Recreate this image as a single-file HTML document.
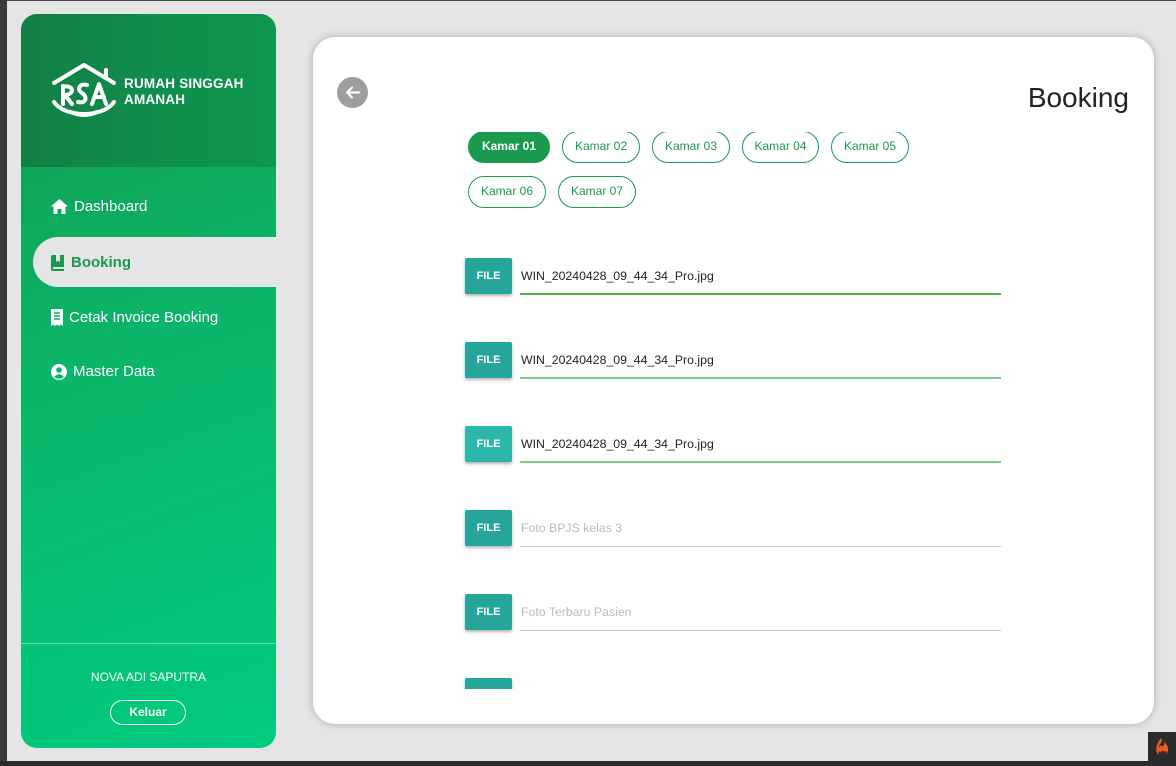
<!DOCTYPE html>
<html><head><meta charset="utf-8"><style>
*{box-sizing:border-box;margin:0;padding:0}
body{width:1176px;height:766px;background:#e5e5e5;position:relative;overflow:hidden;font-family:"Liberation Sans",sans-serif}
.lstrip{position:absolute;left:0;top:0;width:7px;height:766px;background:#3a3a3a}
.bbar{position:absolute;left:0;top:761px;width:1176px;height:5px;background:#2a2a2a}
.tline{position:absolute;left:0;top:0;width:1176px;height:1px;background:#444}
.side{position:absolute;left:21px;top:14px;width:255px;height:734px;border-radius:16px;overflow:hidden;background:linear-gradient(160deg,#129a4f 0%,#0bb569 45%,#00cc80 100%)}
.head{position:absolute;left:0;top:0;width:255px;height:153px;background:linear-gradient(90deg,#127f46,#0f8f4d 60%,#0f9650);}
.brand{position:absolute;left:103px;top:62px;color:#fff;font-weight:bold;font-size:13.5px;line-height:16px;letter-spacing:.2px}
.item{position:absolute;left:30px;color:#fff;font-size:15px;display:flex;align-items:center;gap:6px}
.active{position:absolute;left:12px;top:223px;width:244px;height:50px;background:#e5e5e5;border-radius:25px 0 0 25px}
.sep{position:absolute;left:0;top:629px;width:255px;height:1px;background:rgba(255,255,255,.4)}
.name{position:absolute;left:0;top:656px;width:255px;text-align:center;color:#fff;font-size:12px}
.kel{position:absolute;left:89px;top:686px;width:76px;height:25px;border:1.5px solid #fff;border-radius:13px;color:#fff;font-weight:bold;font-size:12px;text-align:center;line-height:22px}
.card{position:absolute;left:313px;top:37px;width:841px;height:687px;background:#fff;border-radius:22px;box-shadow:0 0 8px rgba(0,0,0,.25)}
.back{position:absolute;left:337px;top:77px;width:31px;height:31px;border-radius:50%;background:#9e9e9e}
.title{position:absolute;right:47px;top:82px;font-size:28px;color:#222}
.clip{position:absolute;left:313px;top:132px;width:841px;height:557px;overflow:hidden}
.chip{position:absolute;height:32px;border:1.5px solid #1a9a4e;border-radius:16px;color:#1a9a4e;font-size:12px;text-align:center;line-height:29px}
.chip.on{background:#1a9a4e;color:#fff;font-weight:bold}
.fb{position:absolute;left:152px;width:47px;height:36px;background:#26a69a;color:#fff;font-size:11px;font-weight:bold;text-align:center;line-height:36px;border-radius:2px;box-shadow:0 2px 3px rgba(0,0,0,.3)}
.fi{position:absolute;left:207px;width:481px;height:37px;font-size:12.3px;color:#222;line-height:36px;padding-left:1px}
.fi.ok{border-bottom:2px solid #4caf50}
.fi.ph{border-bottom:1.5px solid #c8c8c8;color:#bbb}
</style></head><body>
<div class="tline"></div><div class="lstrip"></div>
<div class="side">
 <div class="head"></div>
 <svg style="position:absolute;left:30px;top:48px" width="66" height="58" viewBox="0 0 66 58" fill="none" stroke="#fff" stroke-width="4" stroke-linecap="round" stroke-linejoin="round">
  <path d="M3 21 L33 3 L63 21"/><path d="M55 15 V8"/>
  <path d="M12 24 V42"/><path d="M12 25 C22 22 25 32 14 33 L21 42"/>
  <path d="M36 23 C29 21 25 27 31 31 C37 35 35 42 27 40"/>
  <path d="M41 42 L48 22 L55 42 M44 35 H53"/>
  <path d="M3 40 C14 56 52 56 63 40"/><path d="M20 50 C28 54 38 54 46 50"/>
 </svg>
 <div class="brand">RUMAH SINGGAH<br>AMANAH</div>
 <div class="item" style="top:184px"><svg width="17" height="15" viewBox="0 0 17 15"><path d="M8.5 0 L17 7.5 H14.5 V15 H10.5 V10 H6.5 V15 H2.5 V7.5 H0 Z" fill="#fff"/></svg>Dashboard</div>
 <div class="active"></div>
 <div class="item" style="top:240px;color:#179a4f;font-weight:bold"><svg width="14" height="16" viewBox="0 0 14 16"><path d="M0 2 Q0 0 2 0 H13 V12 H2 V14 H13 V16 H2 Q0 16 0 14 Z" fill="#179a4f"/><path d="M5 0 V7 L7 5.5 L9 7 V0" fill="#e5e5e5"/></svg>Booking</div>
 <div class="item" style="top:295px"><svg width="12" height="17" viewBox="0 0 12 17"><path d="M0 0 H12 V17 L10 15.5 L8 17 L6 15.5 L4 17 L2 15.5 L0 17 Z" fill="#fff"/><path d="M3 4H9M3 7H9M3 10H9" stroke="#10a85c" stroke-width="1.5"/></svg>Cetak Invoice Booking</div>
 <div class="item" style="top:349px"><svg width="16" height="16" viewBox="0 0 16 16"><circle cx="8" cy="8" r="8" fill="#fff"/><circle cx="8" cy="6" r="2.8" fill="#0db468"/><path d="M3 13 Q8 7.5 13 13 Q8 16.5 3 13Z" fill="#0db468"/></svg>Master Data</div>
 <div class="sep"></div>
 <div class="name">NOVA ADI SAPUTRA</div>
 <div class="kel">Keluar</div>
</div>
<div class="card"></div>
<div class="back"><svg width="31" height="31" viewBox="0 0 31 31" fill="none" stroke="#fff" stroke-width="2.2" stroke-linecap="round" stroke-linejoin="round"><path d="M22 15.5 H10 M15 10.5 L10 15.5 L15 20.5"/></svg></div>
<div class="title">Booking</div>
<div class="clip">
 <div class="chip on" style="left:155px;top:-1px;width:82px">Kamar 01</div>
 <div class="chip" style="left:249px;top:-1px;width:78px">Kamar 02</div>
 <div class="chip" style="left:339px;top:-1px;width:78px">Kamar 03</div>
 <div class="chip" style="left:429px;top:-1px;width:77px">Kamar 04</div>
 <div class="chip" style="left:518px;top:-1px;width:78px">Kamar 05</div>
 <div class="chip" style="left:155px;top:44px;width:78px">Kamar 06</div>
 <div class="chip" style="left:245px;top:44px;width:78px">Kamar 07</div>
 <div class="fb" style="top:126px">FILE</div><div class="fi ok" style="top:126px">WIN_20240428_09_44_34_Pro.jpg</div>
 <div class="fb" style="top:210px">FILE</div><div class="fi ok" style="top:210px;border-bottom-color:#7cc97f">WIN_20240428_09_44_34_Pro.jpg</div>
 <div class="fb" style="top:294px;background:#2bb8ab">FILE</div><div class="fi ok" style="top:294px;border-bottom-color:#7cc97f">WIN_20240428_09_44_34_Pro.jpg</div>
 <div class="fb" style="top:378px">FILE</div><div class="fi ph" style="top:378px">Foto BPJS kelas 3</div>
 <div class="fb" style="top:462px">FILE</div><div class="fi ph" style="top:462px">Foto Terbaru Pasien</div>
 <div class="fb" style="top:546px">FILE</div>
</div>
<div class="bbar"></div>
<div style="position:absolute;left:1148px;top:732px;width:28px;height:29px;background:#2b2b2b"></div>
<svg style="position:absolute;left:1155px;top:738px" width="15" height="18" viewBox="0 0 15 18"><path d="M6 0 C9 4 3 6 4 10 C4.5 7 7 7 7 9 C8 7 10 7 9 4 C13 7 15 12 11 16 C12 13 10 12 9 14 C8 12 6 12 6 15 C5 13 3 12 4 17 C0 14 0 8 6 0Z" fill="#f05a1a"/></svg>
</body></html>
